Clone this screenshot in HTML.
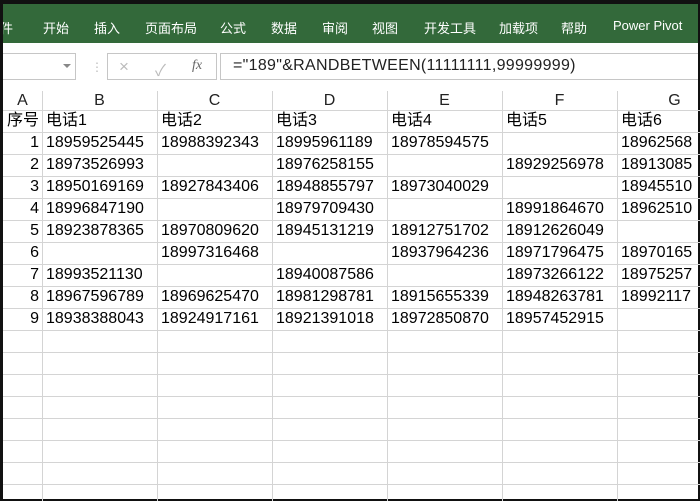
<!DOCTYPE html>
<html><head><meta charset="utf-8"><style>
*{margin:0;padding:0;box-sizing:border-box}
body{width:700px;height:501px;overflow:hidden;background:#fff;font-family:"Liberation Sans","Noto Sans CJK SC",sans-serif;position:relative}
.top{position:absolute;left:0;top:0;width:700px;height:4px;background:#111}
.rib{position:absolute;left:0;top:4px;width:700px;height:39px;background:#33693a;color:#fff;font-size:13px}
.rib span{position:absolute;top:14px}
.fb{position:absolute;top:43px;left:0;width:700px;height:48px;background:#fff}
.box{position:absolute;border:1px solid #c6c6c6;background:#fff}
.c{position:absolute;font-size:16px;color:#000;white-space:nowrap;height:22px;line-height:22px}
.h{position:absolute;font-size:16px;color:#222;text-align:center;top:91px;height:19px;line-height:20px}
.vl{position:absolute;width:1px;background:#d4d4d4}
.hl{position:absolute;height:1px;background:#d4d4d4;left:3px;width:697px}
</style></head><body>
<div class="top"></div>
<div class="rib">
<span style="left:0">件</span><span style="left:43px">开始</span><span style="left:94px">插入</span><span style="left:145px">页面布局</span><span style="left:220px">公式</span><span style="left:271px">数据</span><span style="left:322px">审阅</span><span style="left:372px">视图</span><span style="left:424px">开发工具</span><span style="left:499px">加载项</span><span style="left:561px">帮助</span><span style="left:613px">Power Pivot</span>
</div>
<div class="fb">
<div class="box" style="left:-1px;top:10px;width:77px;height:27px"></div>
<div style="position:absolute;left:63px;top:21px;border-left:4px solid transparent;border-right:4px solid transparent;border-top:4px solid #888"></div>
<div style="position:absolute;left:91px;top:17px;color:#bbb;font-size:12px">⋮</div>
<div class="box" style="left:107px;top:10px;width:110px;height:27px"></div>
<div style="position:absolute;left:119px;top:14px;color:#bbb;font-size:17px">×</div>
<div style="position:absolute;left:155px;top:14px;color:#bbb;font-size:16px">✓</div>
<div style="position:absolute;left:192px;top:15px;color:#666;font-size:14px;font-style:italic;font-family:'Liberation Serif',serif">fx</div>
<div class="box" style="left:220px;top:10px;width:490px;height:27px"></div>
<div style="position:absolute;left:233px;top:14px;font-size:16px;color:#222;letter-spacing:0.3px">="189"&amp;RANDBETWEEN(11111111,99999999)</div>
</div>
<div style="position:absolute;left:0;top:0;width:3px;height:501px;background:#111"></div>
<div style="position:absolute;right:0;top:0;width:2px;height:501px;background:#111"></div>
<div style="position:absolute;left:0;bottom:0;width:700px;height:2px;background:#111"></div>
<div class="vl" style="left:42px;top:91px;height:410px"></div>
<div class="vl" style="left:157px;top:91px;height:410px"></div>
<div class="vl" style="left:272px;top:91px;height:410px"></div>
<div class="vl" style="left:387px;top:91px;height:410px"></div>
<div class="vl" style="left:502px;top:91px;height:410px"></div>
<div class="vl" style="left:617px;top:91px;height:410px"></div>
<div class="hl" style="top:110px"></div><div class="hl" style="top:132px"></div><div class="hl" style="top:154px"></div><div class="hl" style="top:176px"></div><div class="hl" style="top:198px"></div><div class="hl" style="top:220px"></div><div class="hl" style="top:242px"></div><div class="hl" style="top:264px"></div><div class="hl" style="top:286px"></div><div class="hl" style="top:308px"></div><div class="hl" style="top:330px"></div><div class="hl" style="top:352px"></div><div class="hl" style="top:374px"></div><div class="hl" style="top:396px"></div><div class="hl" style="top:418px"></div><div class="hl" style="top:440px"></div><div class="hl" style="top:462px"></div><div class="hl" style="top:484px"></div>
<div class="h" style="left:3px;width:39px">A</div><div class="h" style="left:42px;width:115px">B</div><div class="h" style="left:157px;width:115px">C</div><div class="h" style="left:272px;width:115px">D</div><div class="h" style="left:387px;width:115px">E</div><div class="h" style="left:502px;width:115px">F</div><div class="h" style="left:617px;width:115px">G</div>
<div class="c" style="left:7px;top:110px">序号</div>
<div class="c" style="left:46px;top:110px">电话1</div><div class="c" style="left:161px;top:110px">电话2</div><div class="c" style="left:276px;top:110px">电话3</div><div class="c" style="left:391px;top:110px">电话4</div><div class="c" style="left:506px;top:110px">电话5</div><div class="c" style="left:621px;top:110px">电话6</div>
<div id="r"></div>
<script>
var d=[["18959525445","18988392343","18995961189","18978594575","","18962568"],
["18973526993","","18976258155","","18929256978","18913085"],
["18950169169","18927843406","18948855797","18973040029","","18945510"],
["18996847190","","18979709430","","18991864670","18962510"],
["18923878365","18970809620","18945131219","18912751702","18912626049",""],
["","18997316468","","18937964236","18971796475","18970165"],
["18993521130","","18940087586","","18973266122","18975257"],
["18967596789","18969625470","18981298781","18915655339","18948263781","18992117"],
["18938388043","18924917161","18921391018","18972850870","18957452915",""]];
var h="";for(var i=0;i<9;i++){var t=132+22*i;h+='<div class="c" style="left:3px;width:36px;text-align:right;top:'+t+'px">'+(i+1)+'</div>';for(var j=0;j<6;j++)h+='<div class="c" style="left:'+(46+115*j)+'px;top:'+t+'px">'+d[i][j]+'</div>';}
document.getElementById('r').innerHTML=h;
</script>
</body></html>
